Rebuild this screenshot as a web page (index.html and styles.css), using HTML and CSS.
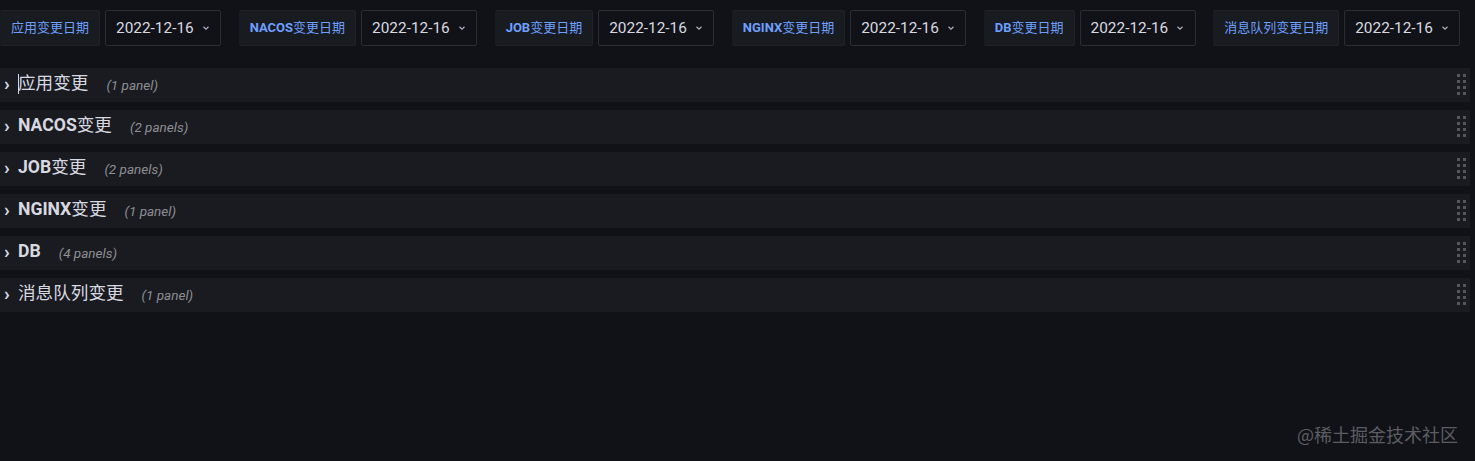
FILE: index.html
```html
<!DOCTYPE html>
<html lang="zh-CN">
<head>
    <meta charset="UTF-8">
    <title>变更看板</title>
    <link rel="stylesheet" href="styles.css">
</head>
<body>
    <div class="submenu">
        <div class="var-group">
            <label class="var-label"><span class="cjk">应用变更日期</span></label>
            <div class="var-select">2022-12-16 <span class="caret"><svg width="8" height="8" viewBox="0 0 8 8"><path d="M1.5 2.8 L4 5.2 L6.5 2.8" fill="none" stroke="currentColor" stroke-width="1.2"/></svg></span></div>
        </div>
        <div class="var-group">
            <label class="var-label">NACOS<span class="cjk">变更日期</span></label>
            <div class="var-select">2022-12-16 <span class="caret"><svg width="8" height="8" viewBox="0 0 8 8"><path d="M1.5 2.8 L4 5.2 L6.5 2.8" fill="none" stroke="currentColor" stroke-width="1.2"/></svg></span></div>
        </div>
        <div class="var-group">
            <label class="var-label">JOB<span class="cjk">变更日期</span></label>
            <div class="var-select">2022-12-16 <span class="caret"><svg width="8" height="8" viewBox="0 0 8 8"><path d="M1.5 2.8 L4 5.2 L6.5 2.8" fill="none" stroke="currentColor" stroke-width="1.2"/></svg></span></div>
        </div>
        <div class="var-group">
            <label class="var-label">NGINX<span class="cjk">变更日期</span></label>
            <div class="var-select">2022-12-16 <span class="caret"><svg width="8" height="8" viewBox="0 0 8 8"><path d="M1.5 2.8 L4 5.2 L6.5 2.8" fill="none" stroke="currentColor" stroke-width="1.2"/></svg></span></div>
        </div>
        <div class="var-group">
            <label class="var-label">DB<span class="cjk">变更日期</span></label>
            <div class="var-select">2022-12-16 <span class="caret"><svg width="8" height="8" viewBox="0 0 8 8"><path d="M1.5 2.8 L4 5.2 L6.5 2.8" fill="none" stroke="currentColor" stroke-width="1.2"/></svg></span></div>
        </div>
        <div class="var-group">
            <label class="var-label"><span class="cjk">消息队列变更日期</span></label>
            <div class="var-select">2022-12-16 <span class="caret"><svg width="8" height="8" viewBox="0 0 8 8"><path d="M1.5 2.8 L4 5.2 L6.5 2.8" fill="none" stroke="currentColor" stroke-width="1.2"/></svg></span></div>
        </div>
    </div>

    <div class="rows">
        <div class="dash-row">
            <span class="row-caret">›</span>
            <span class="row-title"><span class="cursor"></span><span class="cjk">应用变更</span></span>
            <span class="row-count">(1 panel)</span>
            <span class="drag"><i></i><i></i><i></i><i></i><i></i><i></i><i></i><i></i></span>
        </div>
        <div class="dash-row">
            <span class="row-caret">›</span>
            <span class="row-title">NACOS<span class="cjk">变更</span></span>
            <span class="row-count">(2 panels)</span>
            <span class="drag"><i></i><i></i><i></i><i></i><i></i><i></i><i></i><i></i></span>
        </div>
        <div class="dash-row">
            <span class="row-caret">›</span>
            <span class="row-title">JOB<span class="cjk">变更</span></span>
            <span class="row-count">(2 panels)</span>
            <span class="drag"><i></i><i></i><i></i><i></i><i></i><i></i><i></i><i></i></span>
        </div>
        <div class="dash-row">
            <span class="row-caret">›</span>
            <span class="row-title">NGINX<span class="cjk">变更</span></span>
            <span class="row-count">(1 panel)</span>
            <span class="drag"><i></i><i></i><i></i><i></i><i></i><i></i><i></i><i></i></span>
        </div>
        <div class="dash-row">
            <span class="row-caret">›</span>
            <span class="row-title">DB</span>
            <span class="row-count">(4 panels)</span>
            <span class="drag"><i></i><i></i><i></i><i></i><i></i><i></i><i></i><i></i></span>
        </div>
        <div class="dash-row">
            <span class="row-caret">›</span>
            <span class="row-title"><span class="cjk">消息队列变更</span></span>
            <span class="row-count">(1 panel)</span>
            <span class="drag"><i></i><i></i><i></i><i></i><i></i><i></i><i></i><i></i></span>
        </div>
    </div>

    <div class="watermark">@稀土掘金技术社区</div>
</body>
</html>
```

FILE: styles.css
```css
:root {
    --bg: #111217;
    --row: #1a1b20;
    --label-bg: #181b1f;
    --border: #2a2d33;
    --text: #ccccdc;
    --blue: #6e9fff;
    --muted: #8e8e95;
}

* {
    margin: 0;
    padding: 0;
    box-sizing: border-box;
}

body {
    background: var(--bg);
    color: var(--text);
    font-family: Roboto, "Noto Sans CJK SC", sans-serif;
    width: 1475px;
    height: 461px;
    position: relative;
    overflow: hidden;
}

.cjk {
    font-weight: 400;
}

.submenu {
    display: flex;
    padding-top: 10px;
    gap: 17.4px;
}

.var-group {
    display: flex;
    gap: 5px;
}

.var-label {
    height: 36px;
    display: flex;
    align-items: center;
    padding: 0 10px 2px 11px;
    background: var(--label-bg);
    border: 1px solid #202226;
    border-radius: 2px;
    color: var(--blue);
    font-size: 13px;
    font-weight: 700;
    line-height: 1;
}

.var-label:first-child {
    border-left: none;
}

.var-select {
    height: 36px;
    display: flex;
    align-items: center;
    padding: 0 10.5px 0 10px;
    background: var(--bg);
    border: 1px solid var(--border);
    border-radius: 2px;
    font-size: 15.4px;
    color: #d8d9e0;
    gap: 8px;
}

.caret {
    display: flex;
    color: #b0b1b8;
}

.rows {
    margin-top: 22px;
    display: flex;
    flex-direction: column;
    gap: 8px;
    width: 1470px;
}

.dash-row {
    height: 34px;
    background: var(--row);
    display: flex;
    align-items: center;
    padding-left: 4px;
    position: relative;
}

.row-caret {
    font-size: 19px;
    width: 14px;
    color: #d8d9e0;
    font-weight: 700;
    line-height: 1;
    margin-top: -3px;
}

.row-title {
    font-size: 17.6px;
    font-weight: 700;
    color: #d8d9e0;
    position: relative;
    line-height: 1;
    margin-top: -3px;
}

.cursor {
    position: absolute;
    left: 0;
    top: -1px;
    width: 1px;
    height: 20px;
    background: #d8d9e0;
}

.row-count {
    margin-left: 18px;
    font-size: 13.5px;
    font-style: italic;
    color: var(--muted);
}

.drag {
    position: absolute;
    right: 4px;
    top: 6px;
    display: grid;
    grid-template-columns: 3px 3px;
    column-gap: 3px;
    row-gap: 3px;
}

.drag i {
    display: block;
    width: 3px;
    height: 3px;
    background: #55575d;
}

.watermark {
    position: absolute;
    right: 17px;
    top: 421px;
    font-family: "Noto Sans CJK SC", sans-serif;
    font-size: 18px;
    color: #5c5d62;
}
```
